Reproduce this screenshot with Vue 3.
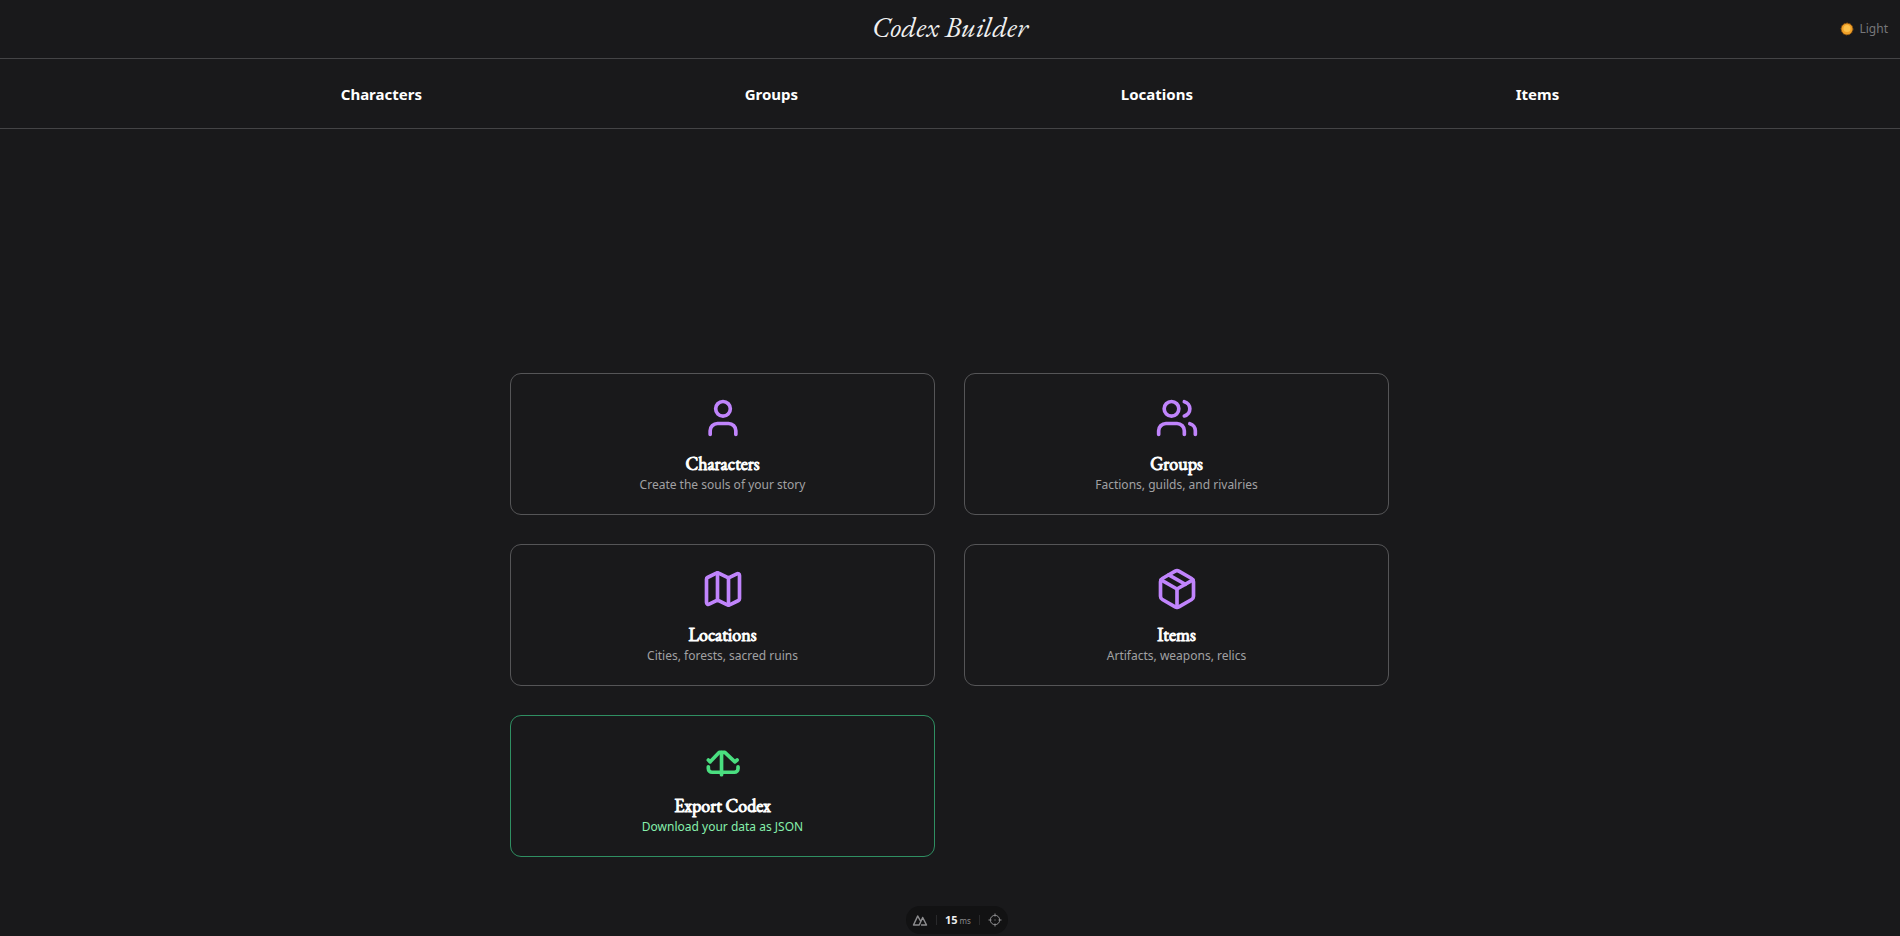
<script setup>
const links = ['Characters', 'Groups', 'Locations', 'Items']

const cards = [
  {
    title: 'Characters',
    text: 'Create the souls of your story',
    paths: ['M19 21v-2a4 4 0 0 0-4-4H9a4 4 0 0 0-4 4v2', 'M16 7a4 4 0 1 1-8 0 4 4 0 0 1 8 0z'],
  },
  {
    title: 'Groups',
    text: 'Factions, guilds, and rivalries',
    paths: [
      'M16 21v-2a4 4 0 0 0-4-4H6a4 4 0 0 0-4 4v2',
      'M13 7a4 4 0 1 1-8 0 4 4 0 0 1 8 0z',
      'M22 21v-2a4 4 0 0 0-3-3.87',
      'M16 3.13a4 4 0 0 1 0 7.75',
    ],
  },
  {
    title: 'Locations',
    text: 'Cities, forests, sacred ruins',
    paths: [
      'M14.106 5.553a2 2 0 0 0 1.788 0l3.659-1.83A1 1 0 0 1 21 4.619v12.764a1 1 0 0 1-.553.894l-4.553 2.277a2 2 0 0 1-1.788 0l-4.212-2.106a2 2 0 0 0-1.788 0l-3.659 1.83A1 1 0 0 1 3 19.381V6.618a1 1 0 0 1 .553-.894l4.553-2.277a2 2 0 0 1 1.788 0z',
      'M15 5.764v15',
      'M9 3.236v15',
    ],
  },
  {
    title: 'Items',
    text: 'Artifacts, weapons, relics',
    paths: [
      'M11 21.73a2 2 0 0 0 2 0l7-4A2 2 0 0 0 21 16V8a2 2 0 0 0-1-1.73l-7-4a2 2 0 0 0-2 0l-7 4A2 2 0 0 0 3 8v8a2 2 0 0 0 1 1.73z',
      'M12 22V12',
      'M3.3 7l8.7 5 8.7-5',
      'M7.5 4.27l9 5.15',
    ],
  },
  {
    title: 'Export Codex',
    text: 'Download your data as JSON',
    accent: true,
    paths: [
      'M4 12l1 1 5-5.2h3l5.5 5.2 1.2-1',
      'M11.2 8v12',
      'M4 15.7v1a2 2 0 0 0 2 2h12.2a2 2 0 0 0 2-2v-1',
    ],
  },
]
</script>

<template>
  <div class="page">
    <header class="top">
      <h1 class="brand">Codex Builder</h1>
      <button class="theme" type="button">
        <svg class="sun" viewBox="0 0 14 14" aria-hidden="true">
          <circle cx="7" cy="7" r="6" fill="#8a5210" stroke="#8a5210" stroke-dasharray="1.5 1.5" />
          <circle cx="7" cy="7" r="5.5" fill="#f0a028" />
          <circle cx="7" cy="6.5" r="3.5" fill="#fcc04a" />
        </svg>
        <span>Light</span>
      </button>
    </header>

    <nav class="nav">
      <a v-for="link in links" :key="link" href="#">{{ link }}</a>
    </nav>

    <main class="main">
      <div class="grid">
        <a v-for="card in cards" :key="card.title" href="#" class="card" :class="{ accent: card.accent }">
          <svg class="icon" viewBox="0 0 24 24" aria-hidden="true">
            <path v-for="d in card.paths" :key="d" :d="d" />
          </svg>
          <h2>{{ card.title }}</h2>
          <p>{{ card.text }}</p>
        </a>
      </div>
    </main>

    <div class="devbar">
      <button type="button" aria-label="Toggle devtools">
        <svg class="peaks" viewBox="0 0 16 12" aria-hidden="true">
          <path d="M9 11h5.5L10.7 3.5 7.2 11H1.5L5.7 2l2.8 5" />
        </svg>
      </button>
      <span class="rule"></span>
      <span class="time"><b>15</b><small>ms</small></span>
      <span class="rule"></span>
      <button type="button" aria-label="Inspect component">
        <svg class="target" viewBox="0 0 14 14" aria-hidden="true">
          <circle cx="7" cy="7" r="4.7" />
          <path d="M7 .5v3M7 10.5v3M.5 7h3M10.5 7h3M7 6.5v1" />
        </svg>
      </button>
    </div>
  </div>
</template>

<style>
body {
  background: #19191b;
}
</style>

<style scoped>
.page {
  min-height: 100vh;
  box-sizing: border-box;
  background: #19191b;
  color: #fff;
  font-family: 'Noto Sans', 'Open Sans', sans-serif;
}

.top {
  display: grid;
  grid-template-columns: 1fr auto 1fr;
  align-items: center;
  height: 58px;
  padding: 0 12px;
  border-bottom: 1px solid #444446;
}

.brand {
  grid-column: 2;
  margin: 0;
  padding-bottom: 4px;
  color: #f0f0f0;
  font: italic 400 29px/36px 'EB Garamond', 'Liberation Serif', serif;
}

button {
  padding: 0;
  border: 0;
  background: none;
  font: inherit;
  cursor: pointer;
}

.theme {
  justify-self: end;
  display: flex;
  align-items: center;
  gap: 5px;
  color: #77777a;
  font-size: 12px;
  line-height: 20px;
}

.sun {
  width: 14px;
  height: 14px;
}

.nav {
  display: flex;
  justify-content: space-evenly;
  align-items: center;
  height: 69px;
  padding: 0 18px;
  border-bottom: 1px solid #444446;
}

.nav a {
  color: #fff;
  font-size: 15px;
  font-weight: 700;
  line-height: 24px;
  text-decoration: none;
}

.main {
  padding: 244px 25px 79px 24px;
}

.grid {
  display: grid;
  grid-template-columns: 1fr 1fr;
  gap: 29px;
  max-width: 879px;
  margin: 0 auto;
}

.card {
  display: flex;
  flex-direction: column;
  align-items: center;
  padding: 22px 24px 20px;
  border: 1px solid #555557;
  border-radius: 11px;
  color: #fff;
  text-align: center;
  text-decoration: none;
}

.icon {
  width: 44px;
  height: 44px;
  margin-bottom: 13px;
  fill: none;
  stroke: #c084fc;
  stroke-width: 2;
  stroke-linecap: round;
  stroke-linejoin: round;
}

.card h2 {
  margin: 0;
  font: 400 18px/22px 'EB Garamond', 'Liberation Serif', serif;
  -webkit-text-stroke: 1px currentColor;
}

.card p {
  margin: 0;
  color: #a1a1a3;
  font-size: 12px;
  line-height: 19px;
}

.accent {
  border-color: #2f8f62;
}

.accent .icon {
  stroke: #4ade80;
}

.accent p {
  color: #86efac;
}

.devbar {
  position: fixed;
  bottom: 2px;
  left: 50%;
  display: flex;
  align-items: center;
  gap: 8px;
  height: 28px;
  padding: 0 6px;
  border-radius: 14px;
  background: #121213;
  transform: translateX(-44px);
}

.devbar button {
  display: flex;
}

.devbar svg {
  fill: none;
  stroke: #8c8c8e;
  stroke-linejoin: round;
}

.devbar .peaks {
  width: 16px;
  height: 12px;
  stroke-width: 1.5;
}

.target {
  width: 14px;
  height: 14px;
}

.rule {
  width: 1px;
  height: 10px;
  background: #29292b;
}

.time {
  display: flex;
  align-items: baseline;
  gap: 2px;
  color: #eee;
  font-size: 11px;
  line-height: 16px;
}

.time small {
  color: #8c8c8e;
  font-size: 8px;
}
</style>
